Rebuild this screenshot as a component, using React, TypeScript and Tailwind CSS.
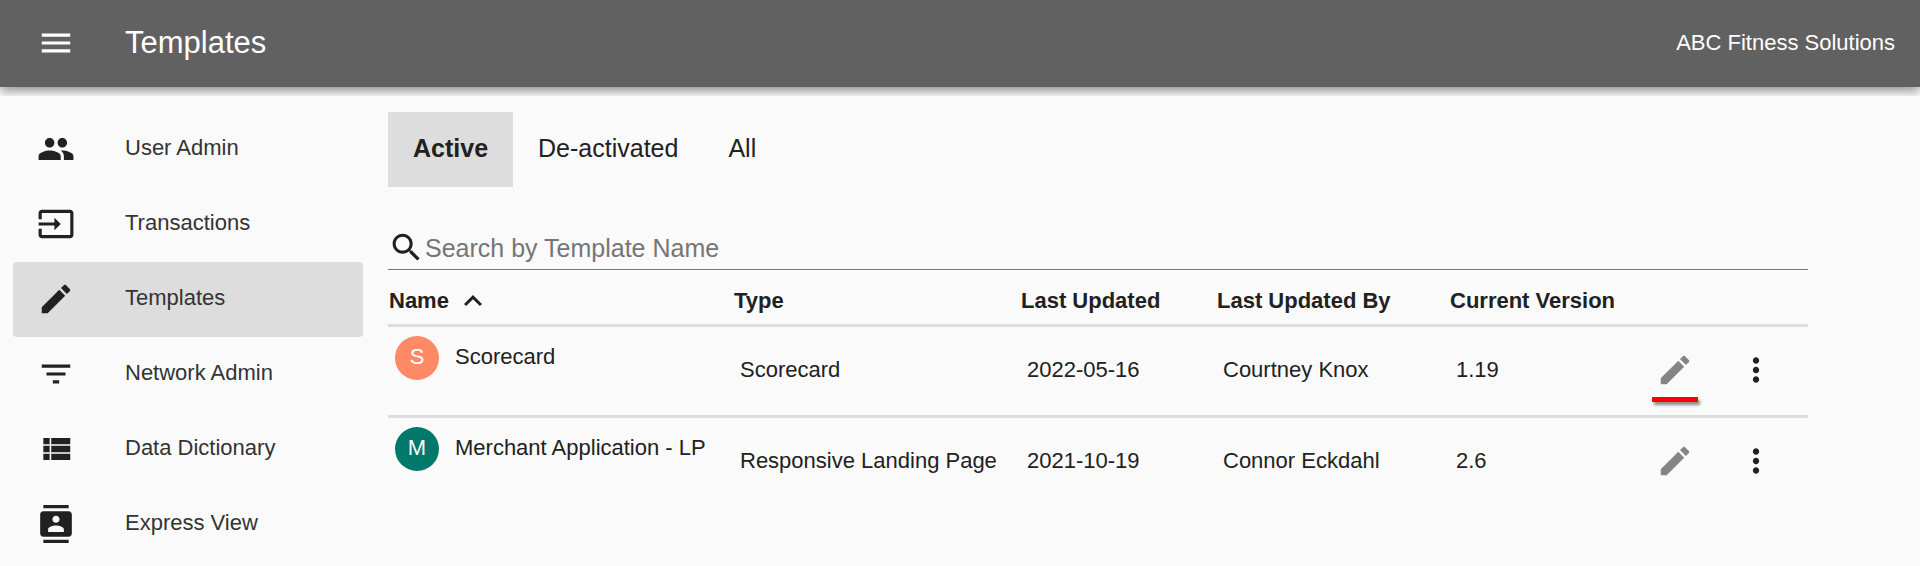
import { useState } from 'react';
import type * as React from 'react';

const icons = {
  menu: 'M3 18h18v-2H3v2zm0-5h18v-2H3v2zm0-7v2h18V6H3z',
  people:
    'M16 11c1.66 0 2.99-1.34 2.99-3S17.66 5 16 5c-1.66 0-3 1.34-3 3s1.34 3 3 3zm-8 0c1.66 0 2.99-1.34 2.99-3S9.66 5 8 5C6.34 5 5 6.34 5 8s1.34 3 3 3zm0 2c-2.33 0-7 1.17-7 3.5V19h14v-2.5c0-2.33-4.67-3.5-7-3.5zm8 0c-.29 0-.62.02-.97.05 1.16.84 1.97 1.97 1.97 3.45V19h6v-2.5c0-2.33-4.67-3.5-7-3.5z',
  input:
    'M21 3.01H3c-1.1 0-2 .9-2 2V9h2V4.99h18v14.03H3V15H1v4.01c0 1.1.9 1.98 2 1.98h18c1.1 0 2-.88 2-1.98v-14c0-1.11-.9-2-2-2zM11 16l4-4-4-4v3H1v2h10v3z',
  edit:
    'M3 17.25V21h3.75L17.81 9.94l-3.75-3.75L3 17.25zM20.71 7.04c.39-.39.39-1.02 0-1.41l-2.34-2.34c-.39-.39-1.02-.39-1.41 0l-1.83 1.83 3.75 3.75 1.83-1.83z',
  filter: 'M10 18h4v-2h-4v2zM3 6v2h18V6H3zm3 7h12v-2H6v2z',
  list: 'M4 14h4v-4H4v4zm0 5h4v-4H4v4zM4 9h4V5H4v4zm5 5h12v-4H9v4zm0 5h12v-4H9v4zM9 5v4h12V5H9z',
  contacts:
    'M20 0H4v2h16V0zM4 24h16v-2H4v2zM20 4H4c-1.1 0-2 .9-2 2v12c0 1.1.9 2 2 2h16c1.1 0 2-.9 2-2V6c0-1.1-.9-2-2-2zm-8 2.75c1.24 0 2.25 1.01 2.25 2.25s-1.01 2.25-2.25 2.25S9.75 10.24 9.75 9 10.76 6.75 12 6.75zM17 17H7v-1.5c0-1.67 3.33-2.5 5-2.5s5 .83 5 2.5V17z',
  search:
    'M15.5 14h-.79l-.28-.27C15.41 12.59 16 11.11 16 9.5 16 5.91 13.09 3 9.5 3S3 5.91 3 9.5 5.91 16 9.5 16c1.61 0 3.09-.59 4.23-1.57l.27.28v.79l5 4.99L20.49 19l-4.99-5zm-6 0C7.01 14 5 11.99 5 9.5S7.01 5 9.5 5 14 7.01 14 9.5 11.99 14 9.5 14z',
  expandLess: 'M12 8l-6 6 1.41 1.41L12 10.83l4.59 4.58L18 14z',
  moreVert:
    'M12 8c1.1 0 2-.9 2-2s-.9-2-2-2-2 .9-2 2 .9 2 2 2zm0 2c-1.1 0-2 .9-2 2s.9 2 2 2 2-.9 2-2-.9-2-2-2zm0 6c-1.1 0-2 .9-2 2s.9 2 2 2 2-.9 2-2-.9-2-2-2z'
};

type IconName = keyof typeof icons;

const Icon: React.FC<{ name: IconName; className?: string }> = ({
  name,
  className = 'w-[38px] h-[38px]'
}) => (
  <svg viewBox="0 0 24 24" fill="currentColor" aria-hidden="true" className={`block shrink-0 ${className}`}>
    <path d={icons[name]} />
  </svg>
);

const navItems: { label: string; icon: IconName }[] = [
  { label: 'User Admin', icon: 'people' },
  { label: 'Transactions', icon: 'input' },
  { label: 'Templates', icon: 'edit' },
  { label: 'Network Admin', icon: 'filter' },
  { label: 'Data Dictionary', icon: 'list' },
  { label: 'Express View', icon: 'contacts' }
];

const tabs = ['Active', 'De-activated', 'All'];

interface Template {
  name: string;
  type: string;
  updated: string;
  updatedBy: string;
  version: string;
  avatarColor: string;
  marked?: boolean;
}

const templates: Template[] = [
  {
    name: 'Scorecard',
    type: 'Scorecard',
    updated: '2022-05-16',
    updatedBy: 'Courtney Knox',
    version: '1.19',
    avatarColor: 'bg-[#ff8a65]',
    marked: true
  },
  {
    name: 'Merchant Application - LP',
    type: 'Responsive Landing Page',
    updated: '2021-10-19',
    updatedBy: 'Connor Eckdahl',
    version: '2.6',
    avatarColor: 'bg-[#00796b]'
  }
];

const Sidebar = () => (
  <nav className="w-[363px] shrink-0 pl-[13px] pt-4">
    {navItems.map((item) => (
      <a
        key={item.label}
        href="#"
        className={`flex items-center h-[75px] pl-6 pb-0.5 rounded gap-[50px] ${
          item.label === 'Templates' ? 'bg-[#dddddd]' : ''
        }`}
      >
        <Icon name={item.icon} />
        <span className="pb-0.5 text-[#333333]">{item.label}</span>
      </a>
    ))}
  </nav>
);

const TemplateRow: React.FC<{ template: Template }> = ({ template }) => (
  <tr className="h-[91px] border-t-3 border-[#dddddd]">
    <td className="align-top pt-[9px] pl-[7px]">
      <div className="flex gap-4 leading-[42px]">
        <span className={`w-11 h-11 rounded-full text-center text-white ${template.avatarColor}`}>
          {template.name[0]}
        </span>
        <span>{template.name}</span>
      </div>
    </td>
    <td className="pl-[7px] pb-0.5">{template.type}</td>
    <td className="pl-[7px] pb-0.5">{template.updated}</td>
    <td className="pl-[7px] pb-0.5">{template.updatedBy}</td>
    <td className="pl-[7px] pb-0.5">{template.version}</td>
    <td className="pb-0.5">
      <button type="button" aria-label={`Edit ${template.name}`} className="relative block mx-auto text-[#858585]">
        <Icon name="edit" />
        {template.marked && (
          <span className="absolute -left-1 top-[46px] w-[46px] h-[5px] bg-[#ff0000] shadow-[2px_3px_3px_rgba(0,0,0,0.45)]"></span>
        )}
      </button>
    </td>
    <td className="pl-[22px] pb-0.5">
      <button type="button" aria-label={`More actions for ${template.name}`} className="block">
        <Icon name="moreVert" />
      </button>
    </td>
  </tr>
);

export default function App() {
  const [activeTab, setActiveTab] = useState('Active');
  const [query, setQuery] = useState('');

  const rows = templates.filter((t) => t.name.toLowerCase().includes(query.toLowerCase()));

  return (
    <div className="min-h-screen bg-[#fafafa] text-[#212121] text-[22px] leading-7 font-['Liberation_Sans',Arial,sans-serif]">
      {/* Header, the wrapper cuts the shadow off above the content */}
      <div className="overflow-hidden pb-[9px]">
        <header className="flex items-center h-[87px] pl-[37px] pr-[25px] pb-0.5 bg-[#616161] text-white shadow-[0_4px_10px_rgba(0,0,0,0.42)]">
          <button type="button" aria-label="Menu">
            <Icon name="menu" />
          </button>
          <h1 className="ml-[50px] text-[31px] leading-10">Templates</h1>
          <span className="ml-auto">ABC Fitness Solutions</span>
        </header>
      </div>

      <div className="flex">
        <Sidebar />

        <main className="flex-1 min-w-0 pt-4 pl-[25px] pr-28">
          {/* Tabs */}
          <div role="tablist" className="flex text-[25px]">
            {tabs.map((tab) => (
              <button
                key={tab}
                type="button"
                role="tab"
                aria-selected={tab === activeTab}
                onClick={() => setActiveTab(tab)}
                className={`h-[75px] px-[25px] pb-1 ${tab === activeTab ? 'bg-[#dddddd] font-bold' : ''}`}
              >
                {tab}
              </button>
            ))}
          </div>

          {/* Search */}
          <label className="flex items-center mt-[39px] h-11 border-b border-[#757575]">
            <Icon name="search" className="w-[37px] h-[37px]" />
            <input
              type="text"
              aria-label="Search by Template Name"
              placeholder="Search by Template Name"
              value={query}
              onChange={(e) => setQuery(e.target.value)}
              className="flex-1 min-w-0 bg-transparent outline-none text-[25px] placeholder:text-[#757575]"
            />
          </label>

          <table className="w-full table-fixed border-collapse text-left">
            <colgroup>
              <col className="w-[345px]" />
              <col className="w-[287px]" />
              <col className="w-[196px]" />
              <col className="w-[233px]" />
              <col className="w-[186px]" />
              <col className="w-[80px]" />
              <col className="w-[93px]" />
            </colgroup>
            <thead>
              <tr className="h-[55px]">
                <th className="pt-2 pl-px">
                  <button type="button" className="flex items-center gap-1.5 font-bold">
                    Name
                    <Icon name="expandLess" className="w-9 h-9" />
                  </button>
                </th>
                <th className="pt-2 pl-px">Type</th>
                <th className="pt-2 pl-px">Last Updated</th>
                <th className="pt-2 pl-px">Last Updated By</th>
                <th className="pt-2 pl-px">Current Version</th>
                <td></td>
                <td></td>
              </tr>
            </thead>
            <tbody>
              {rows.map((t) => (
                <TemplateRow key={t.name} template={t} />
              ))}
            </tbody>
          </table>
        </main>
      </div>
    </div>
  );
}
